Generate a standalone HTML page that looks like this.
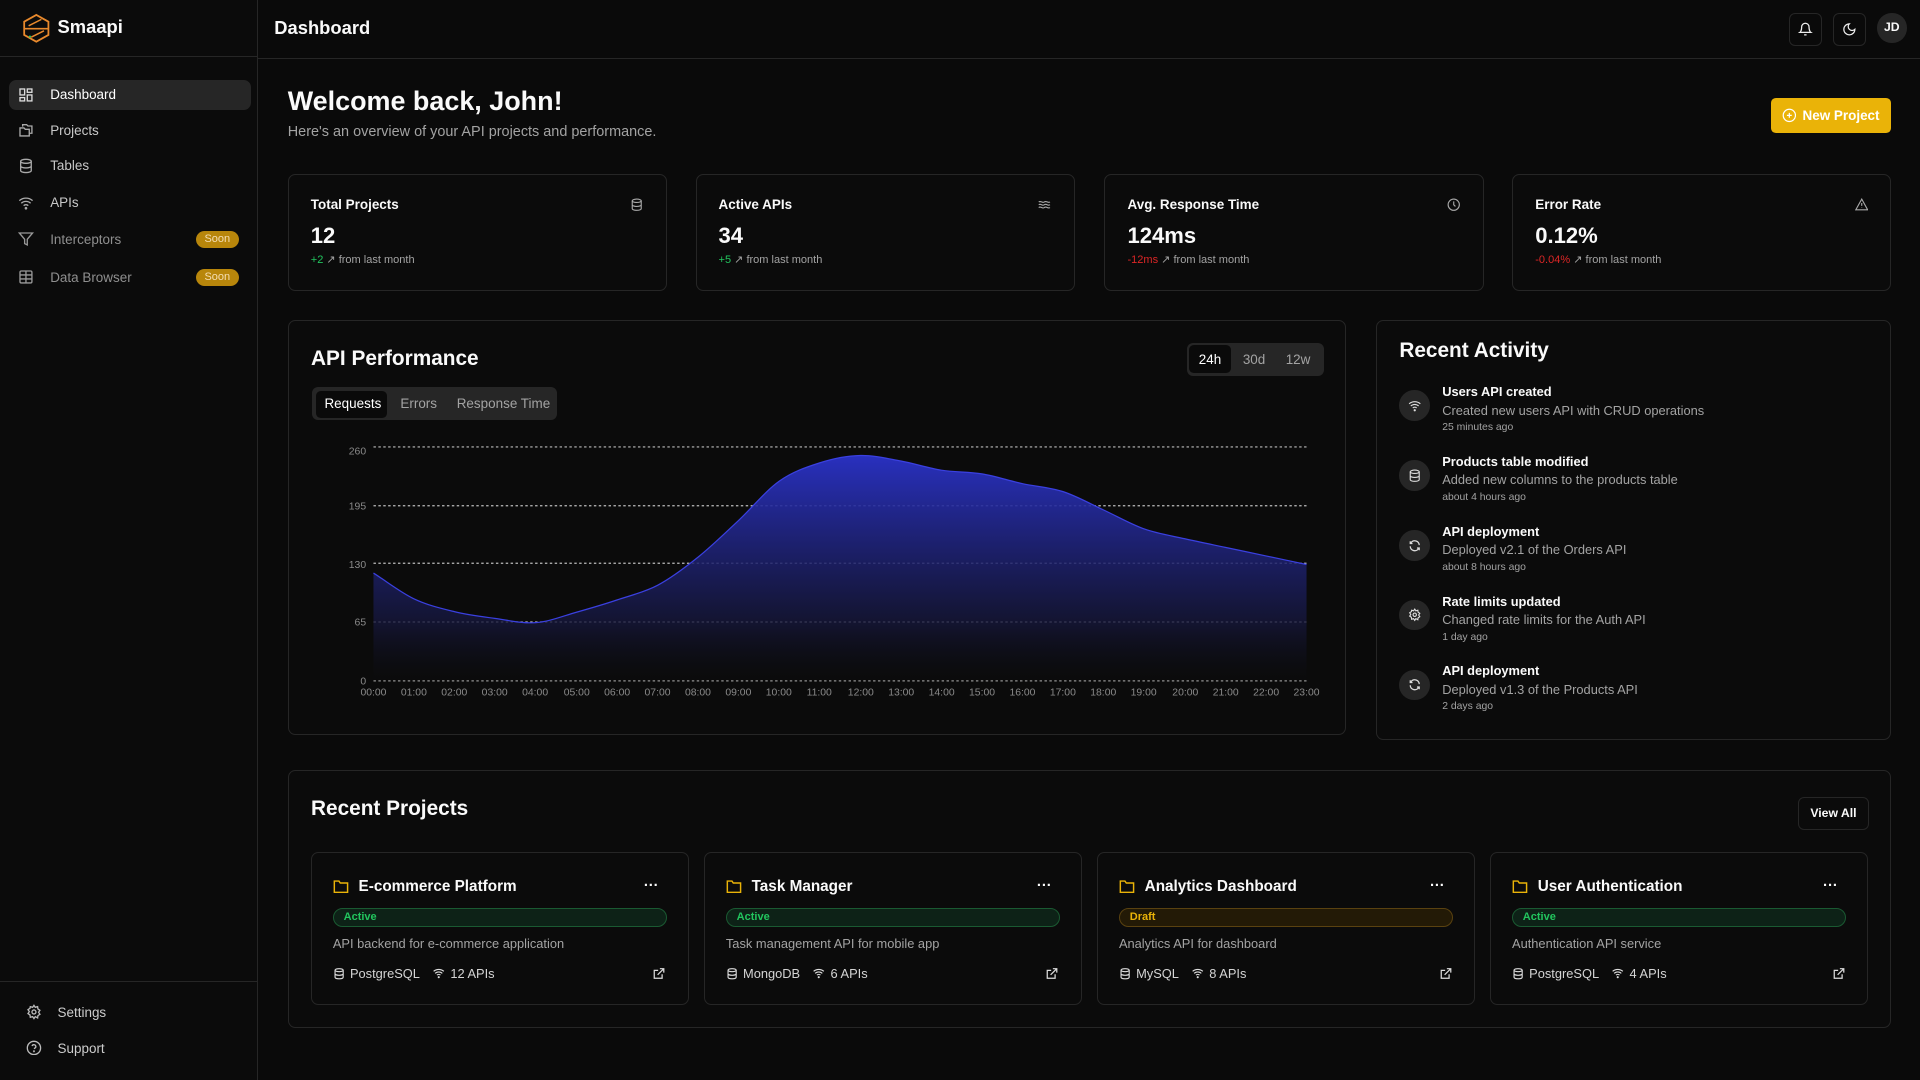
<!DOCTYPE html>
<html><head><meta charset="utf-8"><style>
html,body{margin:0;padding:0;background:#0a0a0a;overflow:hidden}
#root{position:relative;width:1568px;height:882px;zoom:1.22449;font-family:"Liberation Sans",sans-serif;color:#fafafa;background:#0a0a0a}
.a{position:absolute}
.sb{left:0;top:0;width:210px;height:882px;border-right:1px solid #262626;background:#0b0b0b}
.nav{position:absolute;left:7px;width:198px;height:25px;border-radius:6px;font-size:11px;color:#c8c8c8;display:flex;align-items:center}
.nav svg{position:absolute;left:8px;top:6px}
.nav span{position:absolute;left:34px}
.soon{position:absolute;left:153px;width:35px;height:14px;border-radius:8px;background:#b8860b;color:#f5deb3;font-size:9px;text-align:center;line-height:14px}
.card{position:absolute;border:1px solid #262626;border-radius:6px;background:#0b0b0b}
.st{font-size:11px;font-weight:bold;position:absolute;left:18px;top:18px}
.sv{font-size:18px;font-weight:bold;position:absolute;left:18px;top:39px}
.ss{font-size:9px;color:#a3a3a3;position:absolute;left:18px;top:64px}
.si{position:absolute;right:18px;top:19px}
.h2{font-size:17px;font-weight:bold;position:absolute}
.act{position:absolute;left:18px;width:380px;height:50px}
.act .c{position:absolute;left:0;top:5px;width:25px;height:25px;border-radius:50%;background:#262626;display:flex;align-items:center;justify-content:center}
.act .t{position:absolute;left:35px;top:0;font-size:10.5px;font-weight:bold}
.act .d{position:absolute;left:35px;top:15px;font-size:10.5px;color:#a3a3a3}
.act .m{position:absolute;left:35px;top:31px;font-size:8.5px;color:#a3a3a3}
.pc{position:absolute;top:696px;width:307px;height:123px;border:1px solid #262626;border-radius:6px;background:#0b0b0b}
.pc .ti{position:absolute;left:38px;top:20px;font-size:12.5px;font-weight:bold}
.pc .fo{position:absolute;left:17px;top:21px}
.pc .dots{position:absolute;right:24px;top:20px;font-size:12px;font-weight:bold}
.pc .bd{position:absolute;left:17px;top:45px;width:271px;height:14px;border-radius:8px;font-size:9px;line-height:14px;text-indent:8px;font-weight:bold}
.g{background:#0d2217;border:1px solid #1a5a32;color:#22c55e}
.y{background:#231a06;border:1px solid #5a4210;color:#eab308}
.pc .de{position:absolute;left:17px;top:68px;font-size:10.5px;color:#a3a3a3}
.pc .ft{position:absolute;left:17px;top:92px;font-size:10.5px;color:#d4d4d4;display:flex;align-items:center;gap:4px}
.pc .ex{position:absolute;right:18px;top:93px}
.tab{position:absolute;font-size:11px;color:#a3a3a3;top:0;height:27px;line-height:27px}
.ax{font-size:8.5px;fill:#8a8a8a;font-family:"Liberation Sans",sans-serif}
</style></head><body><div id="root">

<div class="a sb">
 <div class="a" style="left:0;top:46px;width:210px;border-top:1px solid #262626"></div>
 <svg class="a" style="left:17px;top:11px" width="25" height="25" viewBox="0 0 24 24" fill="none" stroke="#e8892c" stroke-width="1.4"><path d="M12 1.5L21.5 6.8V17.2L12 22.5L2.5 17.2V6.8Z"/><path d="M3 12.3H21M6 10L16 5M8 19L18 14" stroke-width="1.2"/><circle cx="7" cy="18.5" r=".9" fill="#22c55e" stroke="none"/></svg>
 <div class="a" style="left:47px;top:13px;font-size:15px;font-weight:bold">Smaapi</div>

 <div class="nav" style="top:65px;background:#262626;color:#fff"><svg width="13" height="13" viewBox="0 0 24 24" fill="none" stroke="#ddd" stroke-width="2"><rect x="3" y="3" width="7" height="9"/><rect x="14" y="3" width="7" height="5"/><rect x="14" y="12" width="7" height="9"/><rect x="3" y="16" width="7" height="5"/></svg><span>Dashboard</span></div>
 <div class="nav" style="top:94px"><svg width="13" height="13" viewBox="0 0 24 24" fill="none" stroke="#aaa" stroke-width="2"><path d="M7 7V4h6l2 2h6v11h-4"/><path d="M3 9h6l2 2h6v10H3z"/></svg><span>Projects</span></div>
 <div class="nav" style="top:123px"><svg width="13" height="13" viewBox="0 0 24 24" fill="none" stroke="#aaa" stroke-width="2"><ellipse cx="12" cy="5" rx="8" ry="3"/><path d="M4 5v14c0 1.7 3.6 3 8 3s8-1.3 8-3V5M4 12c0 1.7 3.6 3 8 3s8-1.3 8-3"/></svg><span>Tables</span></div>
 <div class="nav" style="top:153px"><svg width="13" height="13" viewBox="0 0 24 24" fill="none" stroke="#aaa" stroke-width="2"><path d="M2 8.5a15 15 0 0 1 20 0M5 12.5a10 10 0 0 1 14 0M8.5 16a5 5 0 0 1 7 0"/><circle cx="12" cy="20" r="1"/></svg><span>APIs</span></div>
 <div class="nav" style="top:183px;color:#8f8f8f"><svg width="13" height="13" viewBox="0 0 24 24" fill="none" stroke="#999" stroke-width="2"><path d="M22 3H2l8 9.5V19l4 2v-8.5z"/></svg><span>Interceptors</span><div class="soon">Soon</div></div>
 <div class="nav" style="top:214px;color:#8f8f8f"><svg width="13" height="13" viewBox="0 0 24 24" fill="none" stroke="#999" stroke-width="2"><rect x="3" y="3" width="18" height="18" rx="2"/><path d="M3 9h18M3 15h18M12 3v18"/></svg><span>Data Browser</span><div class="soon">Soon</div></div>

 <div class="a" style="left:0;top:801px;width:210px;border-top:1px solid #262626"></div>
 <svg class="a" style="left:21px;top:820px" width="13" height="13" viewBox="0 0 24 24" fill="none" stroke="#bbb" stroke-width="2"><circle cx="12" cy="12" r="3"/><path d="M12 2l2 3 3.5-1 .5 3.5 3 2-2 3 2 3-3 2-.5 3.5L14 19l-2 3-2-3-3.5 1L6 16.5l-3-2 2-3-2-3 3-2L6.5 4 10 5z"/></svg>
 <div class="a" style="left:47px;top:821px;font-size:11px;color:#ccc">Settings</div>
 <svg class="a" style="left:21px;top:849px" width="13" height="13" viewBox="0 0 24 24" fill="none" stroke="#bbb" stroke-width="2"><circle cx="12" cy="12" r="10"/><path d="M9.1 9a3 3 0 0 1 5.8 1c0 2-3 3-3 3"/><circle cx="12" cy="17" r=".6"/></svg>
 <div class="a" style="left:47px;top:850px;font-size:11px;color:#ccc">Support</div>
</div>

<div class="a" style="left:211px;top:47px;width:1357px;border-top:1px solid #262626"></div>
<div class="a" style="left:224px;top:14px;font-size:15px;font-weight:bold">Dashboard</div>
<div class="a" style="left:1461px;top:11px;width:25px;height:25px;border:1px solid #262626;border-radius:5px;display:flex;align-items:center;justify-content:center"><svg width="12" height="12" viewBox="0 0 24 24" fill="none" stroke="#eee" stroke-width="2"><path d="M6 8a6 6 0 0 1 12 0c0 7 3 9 3 9H3s3-2 3-9M10 21h4"/></svg></div>
<div class="a" style="left:1497px;top:11px;width:25px;height:25px;border:1px solid #262626;border-radius:5px;display:flex;align-items:center;justify-content:center"><svg width="12" height="12" viewBox="0 0 24 24" fill="none" stroke="#eee" stroke-width="2"><path d="M12 3a6 6 0 0 0 9 9 9 9 0 1 1-9-9z"/></svg></div>
<div class="a" style="left:1533px;top:11px;width:24px;height:24px;border-radius:50%;background:#262626;font-size:10px;font-weight:bold;text-align:center;line-height:24px">JD</div>

<div class="a" style="left:235px;top:70px;font-size:22px;font-weight:bold">Welcome back, John!</div>
<div class="a" style="left:235px;top:101px;font-size:11.8px;color:#a3a3a3">Here's an overview of your API projects and performance.</div>
<div class="a" style="left:1446px;top:80px;width:98px;height:29px;border-radius:4px;background:#eab308;font-size:11px;font-weight:bold;color:#fff;display:flex;align-items:center;justify-content:center;gap:5px"><svg width="12" height="12" viewBox="0 0 24 24" fill="none" stroke="#fff" stroke-width="2"><circle cx="12" cy="12" r="10"/><path d="M12 8v8M8 12h8"/></svg>New Project</div>

<div class="card" style="left:235px;top:142px;width:308px;height:94px"><div class="st">Total Projects</div><svg class="si" width="11" height="11" viewBox="0 0 24 24" fill="none" stroke="#aaa" stroke-width="2"><ellipse cx="12" cy="5" rx="8" ry="3"/><path d="M4 5v14c0 1.7 3.6 3 8 3s8-1.3 8-3V5M4 12c0 1.7 3.6 3 8 3s8-1.3 8-3"/></svg><div class="sv">12</div><div class="ss"><span style="color:#22c55e">+2</span> &#8599; from last month</div></div>
<div class="card" style="left:568px;top:142px;width:308px;height:94px"><div class="st">Active APIs</div><svg class="si" width="12" height="11" viewBox="0 0 24 24" fill="none" stroke="#aaa" stroke-width="2"><path d="M2 7c4-3 6 3 10 0s6 3 10 0M2 12c4-3 6 3 10 0s6 3 10 0M2 17c4-3 6 3 10 0s6 3 10 0"/></svg><div class="sv">34</div><div class="ss"><span style="color:#22c55e">+5</span> &#8599; from last month</div></div>
<div class="card" style="left:902px;top:142px;width:308px;height:94px"><div class="st">Avg. Response Time</div><svg class="si" width="11" height="11" viewBox="0 0 24 24" fill="none" stroke="#aaa" stroke-width="2"><circle cx="12" cy="12" r="10"/><path d="M12 6v6l3 3"/></svg><div class="sv">124ms</div><div class="ss"><span style="color:#dc2626">-12ms</span> &#8599; from last month</div></div>
<div class="card" style="left:1235px;top:142px;width:308px;height:94px"><div class="st">Error Rate</div><svg class="si" width="11" height="11" viewBox="0 0 24 24" fill="none" stroke="#aaa" stroke-width="2"><path d="M12 2L1.5 21h21z"/><path d="M12 9v5M12 17v.5"/></svg><div class="sv">0.12%</div><div class="ss"><span style="color:#dc2626">-0.04%</span> &#8599; from last month</div></div>

<div class="card" style="left:235px;top:261px;width:863px;height:338px"></div>
<div class="h2" style="left:254px;top:283px">API Performance</div>
<div class="a" style="left:969px;top:280px;width:112px;height:27px;background:#262626;border-radius:5px">
 <div class="a" style="left:2px;top:2px;width:34px;height:23px;background:#0a0a0a;border-radius:4px"></div>
 <div class="tab" style="left:10px;color:#fff">24h</div><div class="tab" style="left:46px">30d</div><div class="tab" style="left:81px">12w</div>
</div>
<div class="a" style="left:255px;top:316px;width:200px;height:27px;background:#262626;border-radius:5px">
 <div class="a" style="left:3px;top:3px;width:58px;height:22px;background:#0a0a0a;border-radius:4px"></div>
 <div class="tab" style="left:10px;color:#fff">Requests</div><div class="tab" style="left:72px">Errors</div><div class="tab" style="left:118px">Response Time</div>
</div>
<svg class="a" style="left:0;top:0" width="1568" height="882">
 <defs><linearGradient id="gr" x1="0" y1="372" x2="0" y2="556" gradientUnits="userSpaceOnUse"><stop offset="0" stop-color="#2a32c8" stop-opacity=".95"/><stop offset=".75" stop-color="#151638" stop-opacity=".8"/><stop offset="1" stop-color="#0b0b0b" stop-opacity=".3"/></linearGradient></defs>
 <g stroke="#bdbdbd" stroke-dasharray="2 2" stroke-width="1">
  <line x1="305" y1="365" x2="1067" y2="365"/><line x1="305" y1="413" x2="1067" y2="413"/><line x1="305" y1="460" x2="1067" y2="460"/><line x1="305" y1="508" x2="1067" y2="508"/><line x1="305" y1="556" x2="1067" y2="556"/>
 </g>
 <path id="cv" fill="url(#gr)" stroke="none" d="M305,468 C316,475 327,483.75 338,489 C349,494.25 360,496.8 371,499.5 C382,502.2 393,503.5 404,505 C415,506.5 426,509.3 437.5,508.5 C448.5,507.7 459.7,503.1 470.7,500 C481.7,496.9 492.8,493.7 503.8,490 C514.8,486.3 526,483.8 537,478 C548,472.2 559.1,463.8 570.1,455 C581.1,446.2 592.2,435.3 603.2,425 C614.2,414.7 625.3,400.8 636.3,393 C647.3,385.2 658.4,381.5 669.4,378 C680.4,374.5 691.6,372.25 702.6,372 C713.6,371.75 724.7,374.5 735.7,376.5 C746.7,378.5 757.8,382.25 768.8,384 C779.8,385.75 790.9,385.2 801.9,387 C812.9,388.8 824.1,392.6 835.1,395 C846.1,397.4 857.2,397.9 868.2,401.5 C879.2,405.1 890.3,411.4 901.3,416.5 C912.3,421.6 923.5,428.1 934.5,432 C945.5,435.9 956.6,437.5 967.6,440 C978.6,442.5 989.7,444.7 1000.7,447 C1011.7,449.3 1022.9,451.7 1033.9,454 C1044.9,456.3 1056,458.7 1067,461 L1067,556 L305,556 Z"/>
 <path fill="none" stroke="#3a40e0" stroke-width="1" d="M305,468 C316,475 327,483.75 338,489 C349,494.25 360,496.8 371,499.5 C382,502.2 393,503.5 404,505 C415,506.5 426,509.3 437.5,508.5 C448.5,507.7 459.7,503.1 470.7,500 C481.7,496.9 492.8,493.7 503.8,490 C514.8,486.3 526,483.8 537,478 C548,472.2 559.1,463.8 570.1,455 C581.1,446.2 592.2,435.3 603.2,425 C614.2,414.7 625.3,400.8 636.3,393 C647.3,385.2 658.4,381.5 669.4,378 C680.4,374.5 691.6,372.25 702.6,372 C713.6,371.75 724.7,374.5 735.7,376.5 C746.7,378.5 757.8,382.25 768.8,384 C779.8,385.75 790.9,385.2 801.9,387 C812.9,388.8 824.1,392.6 835.1,395 C846.1,397.4 857.2,397.9 868.2,401.5 C879.2,405.1 890.3,411.4 901.3,416.5 C912.3,421.6 923.5,428.1 934.5,432 C945.5,435.9 956.6,437.5 967.6,440 C978.6,442.5 989.7,444.7 1000.7,447 C1011.7,449.3 1022.9,451.7 1033.9,454 C1044.9,456.3 1056,458.7 1067,461"/>
 <g class="ax" text-anchor="end"><text x="299" y="371">260</text><text x="299" y="416">195</text><text x="299" y="464">130</text><text x="299" y="511">65</text><text x="299" y="559">0</text></g>
 <g class="ax" text-anchor="middle">
  <text x="305" y="568">00:00</text><text x="338" y="568">01:00</text><text x="371" y="568">02:00</text><text x="404" y="568">03:00</text><text x="437" y="568">04:00</text><text x="471" y="568">05:00</text><text x="504" y="568">06:00</text><text x="537" y="568">07:00</text><text x="570" y="568">08:00</text><text x="603" y="568">09:00</text><text x="636" y="568">10:00</text><text x="669" y="568">11:00</text><text x="703" y="568">12:00</text><text x="736" y="568">13:00</text><text x="769" y="568">14:00</text><text x="802" y="568">15:00</text><text x="835" y="568">16:00</text><text x="868" y="568">17:00</text><text x="901" y="568">18:00</text><text x="934" y="568">19:00</text><text x="968" y="568">20:00</text><text x="1001" y="568">21:00</text><text x="1034" y="568">22:00</text><text x="1067" y="568">23:00</text>
 </g>
</svg>

<div class="card" style="left:1124px;top:261px;width:419px;height:342px">
 <div class="h2" style="left:18px;top:15px">Recent Activity</div>
 <div class="act" style="top:52px"><div class="c"><svg width="11" height="11" viewBox="0 0 24 24" fill="none" stroke="#ddd" stroke-width="2"><path d="M2 8.5a15 15 0 0 1 20 0M5 12.5a10 10 0 0 1 14 0M8.5 16a5 5 0 0 1 7 0"/><circle cx="12" cy="20" r="1"/></svg></div><div class="t">Users API created</div><div class="d">Created new users API with CRUD operations</div><div class="m">25 minutes ago</div></div>
 <div class="act" style="top:109px"><div class="c"><svg width="11" height="11" viewBox="0 0 24 24" fill="none" stroke="#ddd" stroke-width="2"><ellipse cx="12" cy="5" rx="8" ry="3"/><path d="M4 5v14c0 1.7 3.6 3 8 3s8-1.3 8-3V5M4 12c0 1.7 3.6 3 8 3s8-1.3 8-3"/></svg></div><div class="t">Products table modified</div><div class="d">Added new columns to the products table</div><div class="m">about 4 hours ago</div></div>
 <div class="act" style="top:166px"><div class="c"><svg width="11" height="11" viewBox="0 0 24 24" fill="none" stroke="#ddd" stroke-width="2.2"><path d="M20 11a8 8 0 0 0-14.5-4.5L4 8M4 4v4h4M4 13a8 8 0 0 0 14.5 4.5L20 16M20 20v-4h-4"/></svg></div><div class="t">API deployment</div><div class="d">Deployed v2.1 of the Orders API</div><div class="m">about 8 hours ago</div></div>
 <div class="act" style="top:223px"><div class="c"><svg width="11" height="11" viewBox="0 0 24 24" fill="none" stroke="#ddd" stroke-width="2"><circle cx="12" cy="12" r="3"/><path d="M12 2l2 3 3.5-1 .5 3.5 3 2-2 3 2 3-3 2-.5 3.5L14 19l-2 3-2-3-3.5 1L6 16.5l-3-2 2-3-2-3 3-2L6.5 4 10 5z"/></svg></div><div class="t">Rate limits updated</div><div class="d">Changed rate limits for the Auth API</div><div class="m">1 day ago</div></div>
 <div class="act" style="top:280px"><div class="c"><svg width="11" height="11" viewBox="0 0 24 24" fill="none" stroke="#ddd" stroke-width="2.2"><path d="M20 11a8 8 0 0 0-14.5-4.5L4 8M4 4v4h4M4 13a8 8 0 0 0 14.5 4.5L20 16M20 20v-4h-4"/></svg></div><div class="t">API deployment</div><div class="d">Deployed v1.3 of the Products API</div><div class="m">2 days ago</div></div>
</div>

<div class="card" style="left:235px;top:629px;width:1308px;height:209px"></div>
<div class="h2" style="left:254px;top:651px">Recent Projects</div>
<div class="a" style="left:1468px;top:651px;width:57px;height:25px;border:1px solid #262626;border-radius:5px;font-size:10px;font-weight:bold;text-align:center;line-height:25px">View All</div>

<div class="pc" style="left:254px"><svg class="fo" width="13" height="12" viewBox="0 0 24 22" fill="none" stroke="#eab308" stroke-width="2.2"><path d="M2 3h7l2 3h11v14H2z"/></svg><div class="ti">E-commerce Platform</div><div class="dots">···</div><div class="bd g">Active</div><div class="de">API backend for e-commerce application</div>
<div class="ft"><svg width="10" height="11" viewBox="0 0 24 24" fill="none" stroke="#ddd" stroke-width="2.2"><ellipse cx="12" cy="5" rx="8" ry="3"/><path d="M4 5v14c0 1.7 3.6 3 8 3s8-1.3 8-3V5M4 12c0 1.7 3.6 3 8 3s8-1.3 8-3"/></svg>PostgreSQL&nbsp;&nbsp;<svg width="11" height="10" viewBox="0 0 24 24" fill="none" stroke="#ddd" stroke-width="2.2"><path d="M2 8.5a15 15 0 0 1 20 0M5 12.5a10 10 0 0 1 14 0M8.5 16a5 5 0 0 1 7 0"/><circle cx="12" cy="20" r="1"/></svg>12 APIs</div><svg class="ex" width="11" height="11" viewBox="0 0 24 24" fill="none" stroke="#ddd" stroke-width="2.2"><path d="M18 13v7H4V6h7M14 3h7v7M10 14L21 3"/></svg></div>

<div class="pc" style="left:575px"><svg class="fo" width="13" height="12" viewBox="0 0 24 22" fill="none" stroke="#eab308" stroke-width="2.2"><path d="M2 3h7l2 3h11v14H2z"/></svg><div class="ti">Task Manager</div><div class="dots">···</div><div class="bd g">Active</div><div class="de">Task management API for mobile app</div>
<div class="ft"><svg width="10" height="11" viewBox="0 0 24 24" fill="none" stroke="#ddd" stroke-width="2.2"><ellipse cx="12" cy="5" rx="8" ry="3"/><path d="M4 5v14c0 1.7 3.6 3 8 3s8-1.3 8-3V5M4 12c0 1.7 3.6 3 8 3s8-1.3 8-3"/></svg>MongoDB&nbsp;&nbsp;<svg width="11" height="10" viewBox="0 0 24 24" fill="none" stroke="#ddd" stroke-width="2.2"><path d="M2 8.5a15 15 0 0 1 20 0M5 12.5a10 10 0 0 1 14 0M8.5 16a5 5 0 0 1 7 0"/><circle cx="12" cy="20" r="1"/></svg>6 APIs</div><svg class="ex" width="11" height="11" viewBox="0 0 24 24" fill="none" stroke="#ddd" stroke-width="2.2"><path d="M18 13v7H4V6h7M14 3h7v7M10 14L21 3"/></svg></div>

<div class="pc" style="left:896px"><svg class="fo" width="13" height="12" viewBox="0 0 24 22" fill="none" stroke="#eab308" stroke-width="2.2"><path d="M2 3h7l2 3h11v14H2z"/></svg><div class="ti">Analytics Dashboard</div><div class="dots">···</div><div class="bd y">Draft</div><div class="de">Analytics API for dashboard</div>
<div class="ft"><svg width="10" height="11" viewBox="0 0 24 24" fill="none" stroke="#ddd" stroke-width="2.2"><ellipse cx="12" cy="5" rx="8" ry="3"/><path d="M4 5v14c0 1.7 3.6 3 8 3s8-1.3 8-3V5M4 12c0 1.7 3.6 3 8 3s8-1.3 8-3"/></svg>MySQL&nbsp;&nbsp;<svg width="11" height="10" viewBox="0 0 24 24" fill="none" stroke="#ddd" stroke-width="2.2"><path d="M2 8.5a15 15 0 0 1 20 0M5 12.5a10 10 0 0 1 14 0M8.5 16a5 5 0 0 1 7 0"/><circle cx="12" cy="20" r="1"/></svg>8 APIs</div><svg class="ex" width="11" height="11" viewBox="0 0 24 24" fill="none" stroke="#ddd" stroke-width="2.2"><path d="M18 13v7H4V6h7M14 3h7v7M10 14L21 3"/></svg></div>

<div class="pc" style="left:1217px"><svg class="fo" width="13" height="12" viewBox="0 0 24 22" fill="none" stroke="#eab308" stroke-width="2.2"><path d="M2 3h7l2 3h11v14H2z"/></svg><div class="ti">User Authentication</div><div class="dots">···</div><div class="bd g">Active</div><div class="de">Authentication API service</div>
<div class="ft"><svg width="10" height="11" viewBox="0 0 24 24" fill="none" stroke="#ddd" stroke-width="2.2"><ellipse cx="12" cy="5" rx="8" ry="3"/><path d="M4 5v14c0 1.7 3.6 3 8 3s8-1.3 8-3V5M4 12c0 1.7 3.6 3 8 3s8-1.3 8-3"/></svg>PostgreSQL&nbsp;&nbsp;<svg width="11" height="10" viewBox="0 0 24 24" fill="none" stroke="#ddd" stroke-width="2.2"><path d="M2 8.5a15 15 0 0 1 20 0M5 12.5a10 10 0 0 1 14 0M8.5 16a5 5 0 0 1 7 0"/><circle cx="12" cy="20" r="1"/></svg>4 APIs</div><svg class="ex" width="11" height="11" viewBox="0 0 24 24" fill="none" stroke="#ddd" stroke-width="2.2"><path d="M18 13v7H4V6h7M14 3h7v7M10 14L21 3"/></svg></div>

</div></body></html>
